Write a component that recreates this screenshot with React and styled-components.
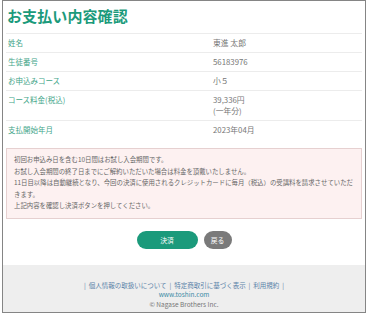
import React from "react";
import styled, { createGlobalStyle } from "styled-components";

const GlobalStyle = createGlobalStyle`
  html, body {
    margin: 0;
    padding: 0;
    background: #fff;
  }
  body {
    padding: 0 7px 0 2px;
    font-family: "Noto Sans CJK JP", "Noto Sans", sans-serif;
    color: #555;
  }
`;

const rows = [
  { label: "姓名", value: ["東進 太郎"] },
  { label: "生徒番号", value: ["56183976"] },
  { label: "お申込みコース", value: ["小５"] },
  { label: "コース料金(税込)", value: ["39,336円", "(一年分)"] },
  { label: "支払開始年月", value: ["2023年04月"], last: true },
];

const notes = [
  "初回お申込み日を含む10日間はお試し入会期間です。",
  "お試し入会期間の終了日までにご解約いただいた場合は料金を頂戴いたしません。",
  "11日目以降は自動継続となり、今回の決済に使用されるクレジットカードに毎月（税込）の受講料を請求させていただきます。",
  "上記内容を確認し決済ボタンを押してください。",
];

const App = () => {
  return (
    <>
      <GlobalStyle />
      <Frame>
        <Main>
          <Title>お支払い内容確認</Title>
          <Table>
            {rows.map((r) => (
              <Row key={r.label} last={r.last}>
                <Label>{r.label}</Label>
                <Value>
                  {r.value.map((v) => (
                    <div key={v}>{v}</div>
                  ))}
                </Value>
              </Row>
            ))}
          </Table>
          <Notice>
            {notes.map((n) => (
              <p key={n}>{n}</p>
            ))}
          </Notice>
          <Buttons>
            <Button>決済</Button>
            <Button secondary>戻る</Button>
          </Buttons>
        </Main>
        <Footer>
          <Links>
            | &nbsp;<a>個人情報の取扱いについて</a>&nbsp; | &nbsp;<a>特定商取引に基づく表示</a>&nbsp; | &nbsp;<a>利用規約</a>&nbsp; |
          </Links>
          <Site>www.toshin.com</Site>
          <Copy>© Nagase Brothers Inc.</Copy>
        </Footer>
      </Frame>
    </>
  );
};

const Frame = styled.div`
  width: 362px;
  border: 1px solid #858585;
  background: #fff;
`;

const Main = styled.div`
  padding: 0 3px 16px 3px;
`;

const Title = styled.h1`
  margin: 0;
  padding: 5px 0 7px 1px;
  font-size: 15px;
  line-height: 20px;
  font-weight: bold;
  color: #1b9a7b;
  letter-spacing: 0.1px;
`;

const Table = styled.div`
  border-top: 1px solid #ececec;
`;

const Row = styled.div`
  display: grid;
  grid-template-columns: 205px 1fr;
  align-items: start;
  padding: 4px 2px;
  border-bottom: 1px solid ${(p) => (p.last ? "transparent" : "#ececec")};
  font-size: 7.5px;
  line-height: 10px;
`;

const Label = styled.div`
  color: #3fa589;
`;

const Value = styled.div`
  color: #777;
  font-size: 7.8px;
  div + div {
    margin-top: 1px;
  }
`;

const Notice = styled.div`
  margin-top: 8px;
  padding: 5px 7px 6px 7px;
  background: #fdf1f1;
  border: 1px solid #e6d0d0;
  font-size: 6.4px;
  line-height: 11.5px;
  color: #666;
  p {
    margin: 0;
  }
`;

const Buttons = styled.div`
  display: flex;
  justify-content: center;
  gap: 6px;
  margin-top: 12px;
`;

const Button = styled.button`
  height: 18px;
  width: ${(p) => (p.secondary ? "28px" : "61px")};
  padding: 0;
  border: none;
  border-radius: 9px;
  background: ${(p) => (p.secondary ? "#7a7a7a" : "#1b9a7b")};
  color: #fff;
  font-family: inherit;
  font-size: 6.8px;
  line-height: 18px;
`;

const Footer = styled.div`
  background: #eeeeee;
  padding: 16px 0 3px;
  text-align: center;
  font-size: 6.5px;
  line-height: 9.5px;
`;

const Links = styled.div`
  color: #5a82a8;
  a {
    color: #5a82a8;
  }
`;

const Site = styled.div`
  color: #3c8aa5;
`;

const Copy = styled.div`
  color: #777;
`;

export default App;
